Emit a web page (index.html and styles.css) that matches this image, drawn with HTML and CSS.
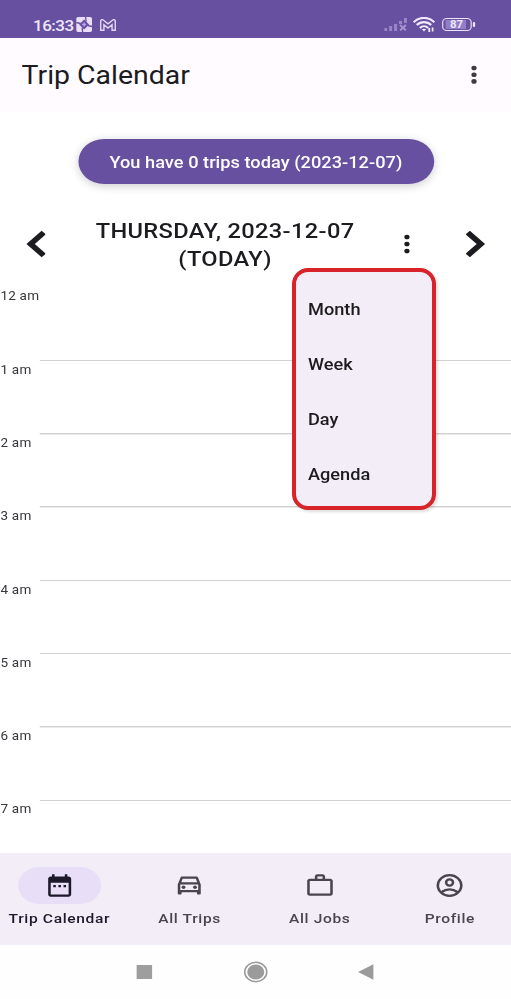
FILE: index.html
```html
<!DOCTYPE html>
<html lang="en">
<head>
<meta charset="utf-8">
<title>Trip Calendar</title>
<link rel="stylesheet" href="styles.css">
</head>
<body>
<div class="screen">
  <div class="status">
    <span class="clock">16:33</span>
    <svg class="app-badge" width="14" height="15" viewBox="0 0 16 15" preserveAspectRatio="none"><rect width="16" height="15" rx="2" fill="#e9def8"/><path d="M8 2.500 13 7.500 8 12.500 3 7.500Z" fill="#6750a0"/><path d="M0 5.500 4.500 6.500M9.500 0 10 4.500M16 9.500l-4.500-1M6.500 15 6 10.500" stroke="#6750a0" stroke-width="1.300"/><path d="M8 5.500v4M6 7.500h4" stroke="#b9a5ea" stroke-width="1.300"/></svg>
    <svg class="mail" width="14" height="12" viewBox="0 0 16 12" preserveAspectRatio="none"><path d="M.7 11.300V2C.7.5 2.300.4 3.200 1L8 4.800 12.800 1c.9-.6 2.500-.5 2.500 1v9.300h-3.200V5.800L8 9 3.900 5.800v5.500Z" fill="none" stroke="#e3d8f5" stroke-width="1.400"/></svg>
    <svg class="signal" width="20" height="13" viewBox="0 0 23 13" preserveAspectRatio="none"><path d="M0 10h3v3H0zM5 8h3v5H5zM10 6h3v7h-3zM15 3h3v3h-3zM20 0h3v5h-3z" fill="#9a86c6"/><path d="m16 7 6 5.500m0-5.500-6 5.500" stroke="#a997d0" stroke-width="1.800"/></svg>
    <svg class="wifi" width="20" height="15" viewBox="0 0 22 15" preserveAspectRatio="none"><path d="M1 5.200C6.500-.6 15.500-.6 21 5.200M4 8.100c4-4 10-4 14 0M7 10.900c2.300-2.300 5.700-2.300 8 0" fill="none" stroke="#efe8fc" stroke-width="2.100"/><path d="m9 12.300 2 2.200 2-2.200q-2-1.300-4 0zM15.200 15l0-4 1.800 0v4zM18.500 10.500h1.700v4h-1.700z" fill="#efe8fc"/></svg>
    <div class="battery"><span>87</span></div>
  </div>
  <header class="appbar">
    <h1>Trip Calendar</h1>
    <svg width="6" height="20" viewBox="0 0 6 20"><g fill="#3e3b42"><circle cx="3" cy="3" r="2.300"/><circle cx="3" cy="9.700" r="2.300"/><circle cx="3" cy="16.400" r="2.300"/></g></svg>
  </header>
  <main>
    <div class="pill"><span>You have 0 trips today (2023-12-07)</span></div>
    <div class="daybar">
      <svg class="prev" width="17" height="28" viewBox="0 0 17 28"><path d="M15.500 2.500 4 14l11.500 11.500" fill="none" stroke="#1c1b1f" stroke-width="5.300"/></svg>
      <h2>THURSDAY, 2023-12-07<br>(TODAY)</h2>
      <svg class="more" width="6" height="20" viewBox="0 0 6 20"><g fill="#1c1b1f"><circle cx="3" cy="3" r="2.300"/><circle cx="3" cy="10" r="2.300"/><circle cx="3" cy="17" r="2.300"/></g></svg>
      <svg class="next" width="17" height="28" viewBox="0 0 17 28"><path d="m1.500 2.500 11.500 11.500L1.500 25.500" fill="none" stroke="#1c1b1f" stroke-width="5.300"/></svg>
    </div>
    <div class="hours">
      <div class="hour"><span>12 am</span></div>
      <div class="hour"><span>1 am</span></div>
      <div class="hour"><span>2 am</span></div>
      <div class="hour"><span>3 am</span></div>
      <div class="hour"><span>4 am</span></div>
      <div class="hour"><span>5 am</span></div>
      <div class="hour"><span>6 am</span></div>
      <div class="hour"><span>7 am</span></div>
    </div>
  </main>
  <nav class="tabs">
    <div class="tab active"><i><svg width="27" height="27" viewBox="0 0 24 24"><path fill="currentColor" d="M19 4h-1V2h-2v2H8V2H6v2H5c-1.100 0-2 .9-2 2v14c0 1.100.9 2 2 2h14c1.100 0 2-.9 2-2V6c0-1.100-.9-2-2-2zm0 16H5V9.500h14zM9 11.500H7v2h2zm4 0h-2v2h2zm4 0h-2v2h2z"/></svg></i><span>Trip Calendar</span></div>
    <div class="tab"><i><svg width="27" height="27" viewBox="0 0 24 24"><path fill="currentColor" d="M18.920 5.010C18.720 4.420 18.160 4 17.500 4h-11c-.66 0-1.210.42-1.420 1.010L3 11v8c0 .55.45 1 1 1h1c.55 0 1-.45 1-1v-1h12v1c0 .55.45 1 1 1h1c.55 0 1-.45 1-1v-8zM6.850 6h10.290l1.080 3.110H5.770zM19 16H5v-5h14z"/><circle cx="7.500" cy="13.500" r="1.500" fill="currentColor"/><circle cx="16.500" cy="13.500" r="1.500" fill="currentColor"/></svg></i><span>All Trips</span></div>
    <div class="tab"><i><svg width="27" height="27" viewBox="0 0 24 24"><path fill="currentColor" fill-rule="evenodd" d="M14 6V4h-4v2zM4 8v11h16V8zm16-2c1.110 0 2 .89 2 2v11c0 1.110-.89 2-2 2H4c-1.110 0-2-.89-2-2V8c0-1.110.89-2 2-2h4V4c0-1.110.89-2 2-2h4c1.110 0 2 .89 2 2v2z"/></svg></i><span>All Jobs</span></div>
    <div class="tab"><i><svg width="27" height="27" viewBox="0 0 24 24"><g fill="none" stroke="currentColor" stroke-width="2"><circle cx="12" cy="12" r="9.200"/><circle cx="12" cy="9.300" r="2.700"/><path d="M5.800 18c3.200-3.400 9.200-3.400 12.400 0"/></g></svg></i><span>Profile</span></div>
  </nav>
  <div class="system">
    <svg width="14" height="14" viewBox="0 0 14 14"><rect width="14" height="14" rx=".5" fill="#9e9e9e"/></svg>
    <svg width="22" height="22" viewBox="0 0 22 22"><circle cx="11" cy="11" r="9.700" fill="none" stroke="#9b9b9b" stroke-width="1.400"/><circle cx="11" cy="11" r="7.500" fill="#9b9b9b"/></svg>
    <svg width="14" height="16" viewBox="0 0 14 16"><path d="M0 8 13.500.3v15.400z" fill="#9b9b9b"/></svg>
  </div>
</div>
<div class="menu">
  <div><span>Month</span></div>
  <div><span>Week</span></div>
  <div><span>Day</span></div>
  <div><span>Agenda</span></div>
</div>
</body>
</html>
```
FILE: styles.css
```css
* { box-sizing: border-box; }
body { margin: 0; width: 511px; height: 999px; overflow: hidden; background: #fff; font-family: Roboto, sans-serif; color: #1c1b1f; }
h1, h2 { margin: 0; font-weight: 400; }
svg { display: block; flex: none; }

/* The display is wider than its layout grid */
.screen { width: 449.550px; height: 999px; display: flex; flex-direction: column; transform: scaleX(1.1367); transform-origin: 0 0; }

.status { height: 38px; flex: none; background: #6750a0; display: flex; align-items: center; padding: 11px 32px 0 29px; color: #eee6fb; }
.clock { font-size: 15px; font-weight: 500; line-height: 18px; width: 38px; letter-spacing: -.45px; padding-top: 2px; }
.mail { margin-left: 7px; }
.signal { margin-left: auto; }
.wifi { margin-left: 5px; }
.battery { position: relative; width: 26px; height: 13px; margin: 0 3px 0 6px; border: 1.500px solid #eee6fb; border-radius: 4px; background: linear-gradient(#927ec8, #927ec8) 2px 1px / 18px 9px no-repeat; display: flex; align-items: center; justify-content: center; font-size: 10px; font-weight: 700; line-height: 10px; }
.battery::after { content: ""; position: absolute; right: -4px; top: 3px; width: 2px; height: 5px; background: #eee6fb; border-radius: 1px; }

.appbar { height: 74px; flex: none; background: #fffbff; display: flex; align-items: center; justify-content: space-between; padding: 0 29.500px 0 19px; }
.appbar h1 { font-size: 25px; line-height: 32px; padding-top: 2px; }

main { height: 741px; flex: none; overflow: hidden; }
.pill { width: 313px; height: 45px; margin: 27px 0 0 68.600px; padding-top: 1px; border-radius: 23px; background: #6750a0; color: #fff; display: flex; align-items: center; justify-content: center; font-size: 16px; font-weight: 500; letter-spacing: .03px; box-shadow: 0 2px 9px rgba(0,0,0,.2); }
.daybar { height: 76px; margin-top: 22px; display: flex; align-items: center; padding: 0 21px 0 22.500px; }
.daybar h2 { width: 240px; margin-left: 38.500px; padding-top: 3px; text-align: center; font-size: 20.800px; font-weight: 500; line-height: 27.500px; letter-spacing: .3px; }
.more { margin-left: 37px; }
.next { margin: 0 2px 0 auto; }
.hours { margin-top: 6px; }
.hour { height: 73.300px; font-size: 11.900px; line-height: 16px; color: #38353b; padding: .4px 0 0 .5px; letter-spacing: .15px; background: linear-gradient(#d2d2d2, #d2d2d2) 35px 100% / 100% 1.500px no-repeat; }

.tabs { height: 92px; flex: none; background: #f3edf7; display: grid; grid-template-columns: repeat(4, 114.500px); justify-content: center; padding-right: 1.500px; color: #49454f; }
.tab { display: flex; flex-direction: column; align-items: center; padding-top: 14px; font-size: 13.700px; font-weight: 500; line-height: 18px; letter-spacing: .57px; }
.tab i { width: 73px; height: 37px; border-radius: 19px; display: flex; align-items: center; justify-content: center; margin-bottom: 5px; }
.active { color: #1d192b; }
.active i { background: #e8def8; }

.system { height: 54px; display: grid; grid-template-columns: 99px 97px 97px; justify-content: center; justify-items: center; align-items: center; padding-right: 2px; background: #fefefe; }

.menu { position: absolute; left: 292px; top: 268px; width: 144px; height: 242px; padding: 9.500px 0 0 12px; border: 4px solid #d8232a; border-radius: 16px; background: #f3edf7; box-shadow: 2px 2px 3px rgba(0,0,0,.13); }
.menu div { height: 55px; display: flex; align-items: center; font-size: 16px; font-weight: 500; }
.menu span { transform: scaleX(1.1367); transform-origin: 0 50%; }
```
